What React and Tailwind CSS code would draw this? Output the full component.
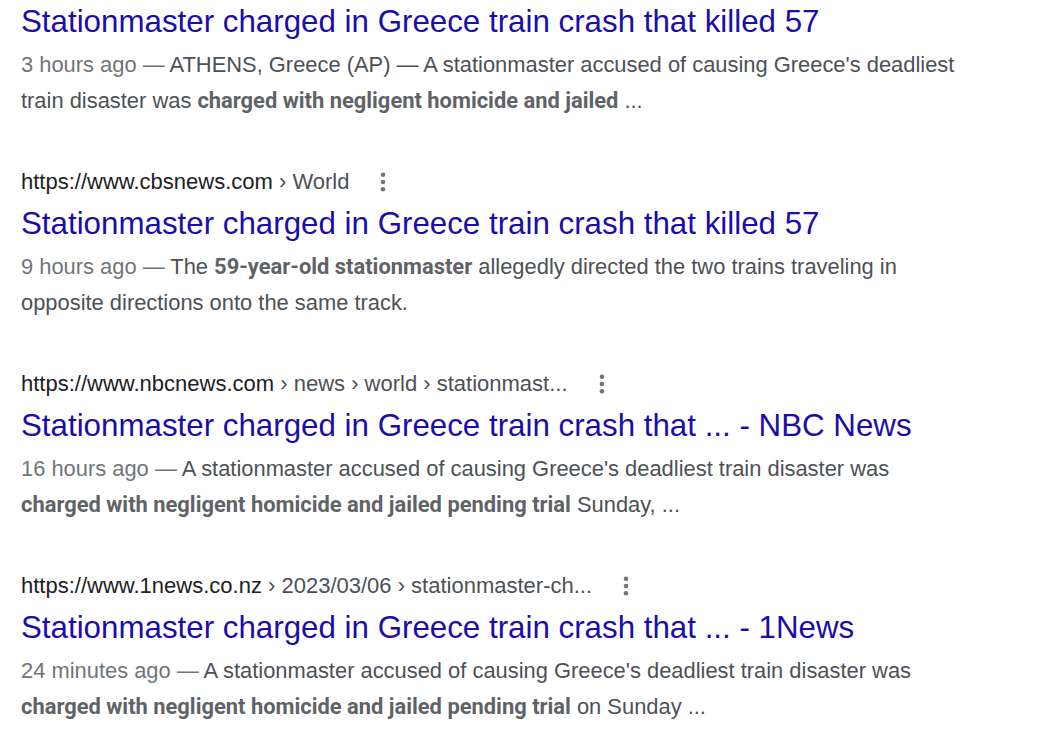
import React from "react";

const Dots = () => (
  <svg width="6" height="22" viewBox="0 0 6 22" className="ml-[31px] shrink-0">
    <circle cx="3" cy="3.7" r="2.3" fill="#70757a" />
    <circle cx="3" cy="11" r="2.3" fill="#70757a" />
    <circle cx="3" cy="18.3" r="2.3" fill="#70757a" />
  </svg>
);

function Result({ url, crumbs, title, date, children, first }) {
  return (
    <div className={first ? "" : "mt-[43px]"}>
      {url && (
        <div className="flex items-center h-[40px] text-[22px] leading-none">
          <span className="whitespace-pre">
            <span className="text-[#202124]">{url}</span>
            <span className="text-[#4d5156]">{crumbs}</span>
          </span>
          <Dots />
        </div>
      )}
      <div className="h-[44px] flex items-center text-[31.3px] leading-none text-[#1a0dab] whitespace-nowrap">{title}</div>
      <div className="mt-[3px] text-[21.9px] leading-[36px] text-[#4d5156] w-[940px]">
        <span className="text-[#70757a]">{date} — </span>
        {children}
      </div>
    </div>
  );
}

const B = ({ children }) => (
  <b className="font-bold text-[#5f6368] font-['Roboto',Arial,sans-serif]">{children}</b>
);

export default function App() {
  return (
    <div className="w-[1051px] h-[756px] bg-white overflow-hidden pl-[21px] pt-0" style={{ fontFamily: "Arial, 'Liberation Sans', sans-serif" }}>
      <Result first title="Stationmaster charged in Greece train crash that killed 57" date="3 hours ago">
        ATHENS, Greece (AP) — A stationmaster accused of causing Greece's deadliest train disaster was <B>charged with negligent homicide and jailed</B> ...
      </Result>
      <Result url="https://www.cbsnews.com" crumbs=" › World" title="Stationmaster charged in Greece train crash that killed 57" date="9 hours ago">
        The <B>59-year-old stationmaster</B> allegedly directed the two trains traveling in opposite directions onto the same track.
      </Result>
      <Result url="https://www.nbcnews.com" crumbs=" › news › world › stationmast..." title="Stationmaster charged in Greece train crash that ... - NBC News" date="16 hours ago">
        A stationmaster accused of causing Greece's deadliest train disaster was <B>charged with negligent homicide and jailed pending trial</B> Sunday, ...
      </Result>
      <Result url="https://www.1news.co.nz" crumbs=" › 2023/03/06 › stationmaster-ch..." title="Stationmaster charged in Greece train crash that ... - 1News" date="24 minutes ago">
        A stationmaster accused of causing Greece's deadliest train disaster was <B>charged with negligent homicide and jailed pending trial</B> on Sunday ...
      </Result>
    </div>
  );
}
